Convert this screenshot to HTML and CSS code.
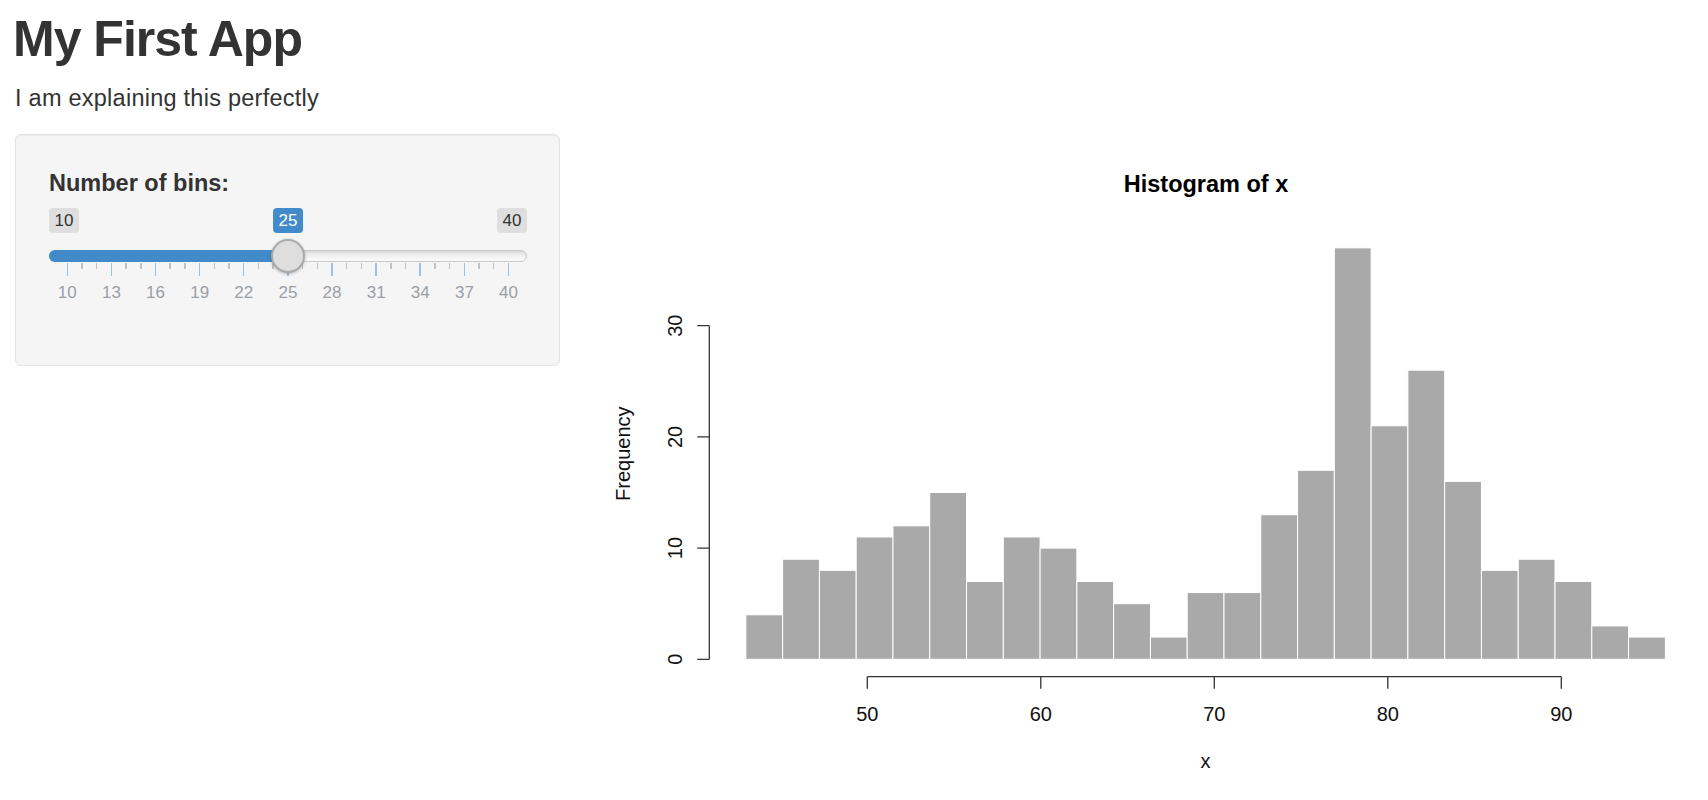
FILE: index.html
```html
<!DOCTYPE html>
<html lang="en">
<head>
<meta charset="utf-8">
<title>My First App</title>
<link rel="stylesheet" href="styles.css">
</head>
<body>
<div class="page">
  <h1 class="title">My First App</h1>
  <p class="lead">I am explaining this perfectly</p>
  <div class="layout">
    <aside class="sidebar">
      <div class="well">
        <label class="control-label">Number of bins:</label>
        <div class="slider">
          <span class="bubble min">10</span>
          <span class="bubble max">40</span>
          <div class="track"></div>
          <div class="bar"></div>
          <div class="ticks">
            <span class="tick major"></span><span class="tick"></span><span class="tick"></span>
            <span class="tick major"></span><span class="tick"></span><span class="tick"></span>
            <span class="tick major"></span><span class="tick"></span><span class="tick"></span>
            <span class="tick major"></span><span class="tick"></span><span class="tick"></span>
            <span class="tick major"></span><span class="tick"></span><span class="tick"></span>
            <span class="tick major"></span><span class="tick"></span><span class="tick"></span>
            <span class="tick major"></span><span class="tick"></span><span class="tick"></span>
            <span class="tick major"></span><span class="tick"></span><span class="tick"></span>
            <span class="tick major"></span><span class="tick"></span><span class="tick"></span>
            <span class="tick major"></span><span class="tick"></span><span class="tick"></span>
            <span class="tick major"></span>
          </div>
          <div class="grid">
            <span>10</span><span>13</span><span>16</span><span>19</span><span>22</span><span>25</span><span>28</span><span>31</span><span>34</span><span>37</span><span>40</span>
          </div>
          <div class="handle"></div>
          <span class="bubble from">25</span>
        </div>
      </div>
    </aside>
    <main class="main">
      <svg class="plot" width="1103" height="666" viewBox="590 134 1103 666" xmlns="http://www.w3.org/2000/svg">
        <g class="bars" fill="#a9a9a9" stroke="#ffffff" stroke-width="1">
          <rect x="745.85" y="614.82" width="36.78" height="44.48"/>
          <rect x="782.63" y="559.22" width="36.78" height="100.08"/>
          <rect x="819.41" y="570.34" width="36.78" height="88.96"/>
          <rect x="856.19" y="536.98" width="36.78" height="122.32"/>
          <rect x="892.97" y="525.86" width="36.78" height="133.44"/>
          <rect x="929.75" y="492.5" width="36.78" height="166.8"/>
          <rect x="966.53" y="581.46" width="36.78" height="77.84"/>
          <rect x="1003.31" y="536.98" width="36.78" height="122.32"/>
          <rect x="1040.09" y="548.1" width="36.78" height="111.2"/>
          <rect x="1076.87" y="581.46" width="36.78" height="77.84"/>
          <rect x="1113.65" y="603.7" width="36.78" height="55.6"/>
          <rect x="1150.43" y="637.06" width="36.78" height="22.24"/>
          <rect x="1187.21" y="592.58" width="36.78" height="66.72"/>
          <rect x="1223.99" y="592.58" width="36.78" height="66.72"/>
          <rect x="1260.77" y="514.74" width="36.78" height="144.56"/>
          <rect x="1297.55" y="470.26" width="36.78" height="189.04"/>
          <rect x="1334.33" y="247.86" width="36.78" height="411.44"/>
          <rect x="1371.11" y="425.78" width="36.78" height="233.52"/>
          <rect x="1407.89" y="370.18" width="36.78" height="289.12"/>
          <rect x="1444.67" y="481.38" width="36.78" height="177.92"/>
          <rect x="1481.45" y="570.34" width="36.78" height="88.96"/>
          <rect x="1518.23" y="559.22" width="36.78" height="100.08"/>
          <rect x="1555.01" y="581.46" width="36.78" height="77.84"/>
          <rect x="1591.79" y="625.94" width="36.78" height="33.36"/>
          <rect x="1628.57" y="637.06" width="36.78" height="22.24"/>
        </g>
        <g class="axes" fill="none" stroke="#333333" stroke-width="1.3">
          <path d="M709.3 659.3 V325.7 M697.3 659.3 H709.3 M697.3 548.1 H709.3 M697.3 436.9 H709.3 M697.3 325.7 H709.3"/>
          <path d="M867.3 676.7 H1561.3 M867.3 676.7 V688.7 M1040.8 676.7 V688.7 M1214.3 676.7 V688.7 M1387.8 676.7 V688.7 M1561.3 676.7 V688.7"/>
        </g>
        <g class="tick-labels">
          <text x="867.3" y="720.5">50</text>
          <text x="1040.8" y="720.5">60</text>
          <text x="1214.3" y="720.5">70</text>
          <text x="1387.8" y="720.5">80</text>
          <text x="1561.3" y="720.5">90</text>
          <text transform="translate(681.5 659.3) rotate(-90)">0</text>
          <text transform="translate(681.5 548.1) rotate(-90)">10</text>
          <text transform="translate(681.5 436.9) rotate(-90)">20</text>
          <text transform="translate(681.5 325.7) rotate(-90)">30</text>
          <text transform="translate(630 453.7) rotate(-90)">Frequency</text>
          <text x="1205.5" y="768.3">x</text>
        </g>
        <text class="plot-title" x="1206" y="191.7">Histogram of x</text>
      </svg>
    </main>
  </div>
</div>
</body>
</html>
```
FILE: styles.css
```css
html, body {
  margin: 0;
  padding: 0;
}

body {
  font-family: "Liberation Sans", Arial, sans-serif;
  color: #333333;
  background: #ffffff;
  overflow: hidden;
}

.page {
  padding: 0 15px;
}

.title {
  margin: 12px 0 14px -2px;
  font-size: 50px;
  line-height: 55px;
  font-weight: 700;
  letter-spacing: -1px;
  color: #333333;
}

.lead {
  margin: 0 0 19px;
  font-size: 23.5px;
  line-height: 34px;
  letter-spacing: 0.25px;
}

.layout {
  display: flex;
  gap: 30px;
}

.sidebar {
  width: 545px;
  flex: none;
}

.well {
  box-sizing: border-box;
  background: #f5f5f5;
  border: 1px solid #e3e3e3;
  border-radius: 6px;
  box-shadow: inset 0 1px 1px rgba(0, 0, 0, 0.05);
  padding: 32px 32px 33px 33px;
}

.control-label {
  display: block;
  font-weight: 700;
  font-size: 23.5px;
  line-height: 33.6px;
  color: #333333;
}

.slider {
  position: relative;
  height: 131px;
}

.bubble {
  position: absolute;
  top: 7.3px;
  height: 25.4px;
  line-height: 25.4px;
  padding: 0 5.5px;
  font-size: 17px;
  border-radius: 4px;
  background: #dedede;
  color: #333333;
}

.bubble.min {
  left: 0;
}

.bubble.max {
  right: 0;
}

.bubble.from {
  left: 239px;
  transform: translateX(-50%);
  background: #428bca;
  color: #ffffff;
}

.track {
  position: absolute;
  left: 0;
  right: 0;
  top: 49px;
  height: 12.7px;
  box-sizing: border-box;
  border: 1px solid #c9c9c9;
  border-radius: 7px;
  background: linear-gradient(#e4e4e4, #fbfbfb);
  box-shadow: inset 0 1px 2px rgba(0, 0, 0, 0.08);
}

.bar {
  position: absolute;
  left: 0;
  width: 239px;
  top: 49px;
  height: 12.7px;
  background: #428bca;
  border-radius: 7px 0 0 7px;
}

.ticks {
  position: absolute;
  left: 17.55px;
  right: 17.55px;
  top: 62.3px;
  display: flex;
  justify-content: space-between;
  align-items: flex-start;
}

.tick {
  width: 1.5px;
  height: 6px;
  background: #c2c2c2;
}

.tick.major {
  height: 13.4px;
  background: #9cc1e4;
}

.grid {
  position: absolute;
  left: -1.7px;
  right: -1.7px;
  top: 82.3px;
  display: flex;
  justify-content: space-between;
  font-size: 17px;
  line-height: 20px;
  color: #9a9fa5;
}

.grid span {
  width: 40px;
  text-align: center;
}

.handle {
  position: absolute;
  left: 222px;
  top: 38.3px;
  width: 34px;
  height: 34px;
  box-sizing: border-box;
  border-radius: 50%;
  background: #dedede;
  border: 2px solid #ababab;
  box-shadow: 0 1px 3px rgba(0, 0, 0, 0.25);
}

.main {
  flex: 1;
  min-width: 0;
}

.plot {
  display: block;
  width: 1103px;
  height: 666px;
}

.plot text {
  font-family: "Liberation Sans", Arial, sans-serif;
}

.tick-labels text {
  font-size: 20px;
  fill: #111111;
  text-anchor: middle;
}

.plot-title {
  font-size: 23.5px;
  font-weight: 700;
  fill: #000000;
  text-anchor: middle;
}
```
